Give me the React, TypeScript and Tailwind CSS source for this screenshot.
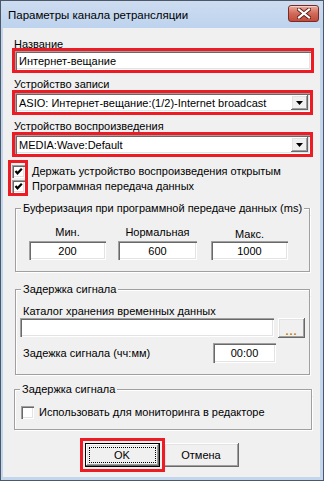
import React from "react";

const sunken =
  "shadow-[inset_1px_1px_0_#a0a0a0,inset_2px_2px_0_#696969,inset_-1px_-1px_0_#ffffff,inset_-2px_-2px_0_#e3e3e3]";
const raised =
  "shadow-[inset_-1px_-1px_0_#696969,inset_1px_1px_0_#ffffff,inset_-2px_-2px_0_#a0a0a0,inset_2px_2px_0_#e3e3e3]";
const red = "border-[3px] border-[#ed1c24]";

function Field({ text, center, className = "" }: { text?: string; center?: boolean; className?: string }) {
  return (
    <div
      className={`bg-white ${sunken} flex items-center ${center ? "justify-center" : "pl-[4px]"} leading-[14px] whitespace-nowrap overflow-hidden ${className}`}
    >
      {text}
    </div>
  );
}

function Combo({ text }: { text: string }) {
  return (
    <div className={`bg-white ${sunken} h-[19px] flex items-center`}>
      <span className="flex-1 pl-[4px] leading-[14px] whitespace-nowrap overflow-hidden">{text}</span>
      <div className={`w-[17px] h-[15px] mr-[2px] bg-[#f0f0f0] ${raised} flex items-center justify-center`}>
        <svg width="7" height="4" viewBox="0 0 7 4">
          <polygon points="0,0 7,0 3.5,4" fill="#000" />
        </svg>
      </div>
    </div>
  );
}

function Check({ checked }: { checked?: boolean }) {
  return (
    <div className={`w-[13px] h-[13px] bg-white ${sunken} flex items-center justify-center shrink-0`}>
      {checked && (
        <svg width="13" height="13" viewBox="0 0 13 13">
          <polyline points="3.5,6 5.5,8.3 9.8,3.8" fill="none" stroke="#000" strokeWidth="2.2" />
        </svg>
      )}
    </div>
  );
}

function Group({ title, className = "", bodyClass = "", children }: { title: string; className?: string; bodyClass?: string; children: React.ReactNode }) {
  return (
    <div className={`flex flex-col ${className}`}>
      <div className="flex h-[14px]">
        <div className="w-[6px] mt-[7px] border-l border-t border-[#a0a0a0] shadow-[inset_1px_1px_0_#ffffff]" />
        <span className="px-[2px] leading-[14px] whitespace-nowrap">{title}</span>
        <div className="flex-1 mt-[7px] border-r border-t border-[#a0a0a0] shadow-[inset_0_1px_0_#ffffff,1px_0_0_#ffffff]" />
      </div>
      <div className={`border-x border-b border-[#a0a0a0] shadow-[inset_1px_0_0_#ffffff,1px_1px_0_#ffffff] ${bodyClass}`}>
        {children}
      </div>
    </div>
  );
}

export default function App() {
  return (
    <div className="w-[324px] h-[481px] bg-[#c3d6ee] border border-[#4a5868] flex flex-col font-['Liberation_Sans',Arial,sans-serif] text-[11px] text-black overflow-hidden">
      {/* Title bar */}
      <div className="h-[27px] flex items-start justify-between pl-[7px] pr-[4px] bg-gradient-to-b from-[#cddcf0] to-[#bed3ee]">
        <span className="mt-[7px] leading-[14px] text-[11.5px]">Параметры канала ретрансляции</span>
        <div className="mt-[4px] w-[31px] h-[17px] rounded-[3px] border border-[#7a2a22] bg-gradient-to-b from-[#e9a99b] via-[#d26a5a] to-[#c24a3a] flex items-center justify-center shadow-[inset_0_1px_0_rgba(255,255,255,0.5)]">
          <svg width="14" height="11" viewBox="0 0 14 11">
            <path d="M2 1.5 L12 9.5 M12 1.5 L2 9.5" stroke="#5a1e18" strokeWidth="4" strokeLinecap="square" />
            <path d="M2 1.5 L12 9.5 M12 1.5 L2 9.5" stroke="#ffffff" strokeWidth="2.2" strokeLinecap="square" />
          </svg>
        </div>
      </div>

      {/* Client area */}
      <div className="flex-1 ml-[2px] mr-[3px] mb-[3px] bg-[#f0f0f0] flex flex-col pt-[9px]">
        <div className="ml-[11px] h-[11px] leading-[14px]">Название</div>
        <div className={`ml-[9px] w-[302px] ${red}`}>
          <Field text="Интернет-вещание" className="h-[19px]" />
        </div>

        <div className="mt-[4px] ml-[11px] h-[13px] leading-[14px]">Устройство записи</div>
        <div className={`ml-[9px] w-[301px] ${red}`}>
          <Combo text="ASIO: Интернет-вещание:(1/2)-Internet broadcast" />
        </div>

        <div className="mt-[4px] ml-[11px] h-[13px] leading-[14px]">Устройство воспроизведения</div>
        <div className={`ml-[9px] w-[301px] ${red}`}>
          <Combo text="MEDIA:Wave:Default" />
        </div>

        <div className="mt-[3px] flex">
          <div className={`ml-[5px] ${red} pl-[1px] pt-[2px] flex flex-col gap-[2px]`}>
            <Check checked />
            <Check checked />
          </div>
          <div className="ml-[4px] pt-[5px] flex flex-col gap-[2px]">
            <div className="h-[13px] leading-[13px] whitespace-nowrap">Держать устройство воспроизведения открытым</div>
            <div className="h-[13px] leading-[13px] whitespace-nowrap">Программная передача данных</div>
          </div>
        </div>

        <Group
          title="Буферизация при программной передаче данных (ms)"
          className="mt-[5px] ml-[12px] w-[295px]"
          bodyClass="pt-[10px] pb-[11px] pl-[13px] flex"
        >
          <div className="w-[77px] flex flex-col">
            <div className="h-[14px] leading-[14px] text-center">Мин.</div>
            <Field text="200" center className="mt-[2px] h-[19px]" />
          </div>
          <div className="ml-[12px] w-[79px] flex flex-col">
            <div className="h-[14px] leading-[14px] text-center">Нормальная</div>
            <Field text="600" center className="mt-[2px] h-[19px]" />
          </div>
          <div className="ml-[14px] w-[77px] flex flex-col">
            <div className="h-[14px] pt-[2px] leading-[14px] text-center">Макс.</div>
            <Field text="1000" center className="mt-[2px] h-[19px]" />
          </div>
        </Group>

        <Group
          title="Задержка сигнала"
          className="mt-[10px] ml-[12px] w-[295px]"
          bodyClass="pt-[8px] pb-[11px] pl-[4px] pr-[4px] flex flex-col"
        >
          <div className="ml-[3px] h-[14px] leading-[14px]">Каталог хранения временных данных</div>
          <div className="flex">
            <Field className="w-[254px] h-[19px]" />
            <div className={`ml-[4px] w-[27px] h-[20px] bg-[#f0f0f0] ${raised} flex items-end justify-center pb-[3px]`}>
              <span className="text-[#c07a00] leading-[8px] text-[11px] font-bold tracking-[1px]">...</span>
            </div>
          </div>
          <div className="mt-[5px] flex items-center">
            <span className="ml-[3px] flex-1 leading-[14px]">Задежка сигнала (чч:мм)</span>
            <Field text="00:00" center className="w-[63px] h-[20px] mr-[29px]" />
          </div>
        </Group>

        <Group
          title="Задержка сигнала"
          className="mt-[7px] ml-[11px] w-[298px]"
          bodyClass="pt-[10px] pb-[10px] pl-[6px] flex items-center"
        >
          <Check />
          <span className="ml-[5px] leading-[13px]">Использовать для мониторинга в редакторе</span>
        </Group>

        <div className="mt-[13px] flex justify-center gap-[4px]">
          <div className="relative">
            <div className="w-[75px] h-[24px] border border-black bg-[#f0f0f0]">
              <div className={`h-full ${raised} p-[3px]`}>
                <div className="h-full border border-dotted border-black flex items-center justify-center leading-[14px]">OK</div>
              </div>
            </div>
            <div className={`absolute -inset-[5px] ${red} z-10 pointer-events-none`} />
          </div>
          <div className={`w-[75px] h-[24px] bg-[#f0f0f0] ${raised} flex items-center justify-center leading-[14px]`}>
            Отмена
          </div>
        </div>
      </div>
    </div>
  );
}
